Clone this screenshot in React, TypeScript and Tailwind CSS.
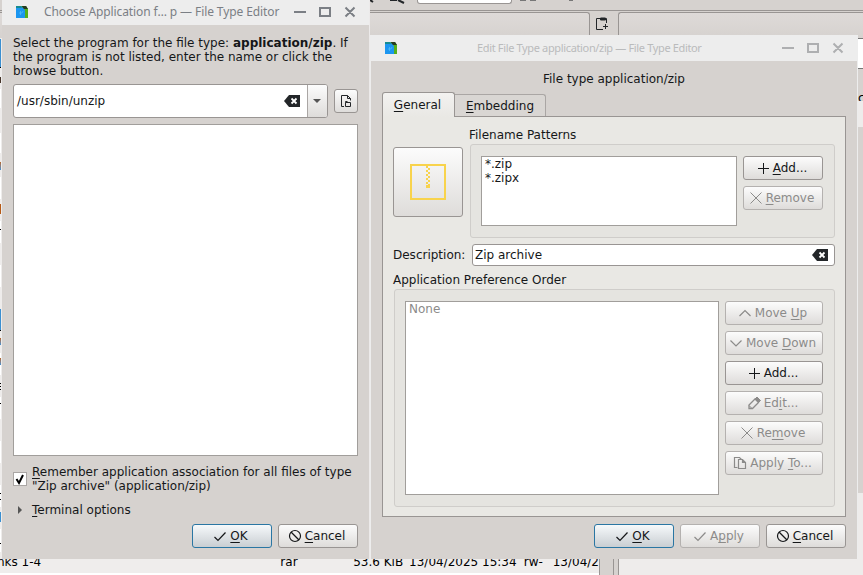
import type { ReactNode } from "react";
import clsx from "clsx";

type IconName =
  | "plus"
  | "cross"
  | "up"
  | "down"
  | "edit"
  | "copy"
  | "check"
  | "cancel";

const paths: Record<IconName, ReactNode> = {
  plus: <path d="M8.500 3v11M3 8.500h11" />,
  cross: <path d="M2.500 2.500l11 11M13.500 2.500l-11 11" />,
  up: <path d="M2.500 11L8 5.500l5.500 5.500" strokeWidth="1.2" />,
  down: <path d="M2.500 5.500L8 11l5.500-5.500" strokeWidth="1.2" />,
  edit: (
    <>
      <path d="M3 13.500v-3.500l6-6 3.500 3.500-6 6z" strokeWidth="1.3" />
      <path d="M9 4l2-2 3.500 3.500-2 2z" fill="currentColor" />
      <path d="M3 10.500l3 3" />
    </>
  ),
  copy: (
    <>
      <path d="M5.500 12.500h-3v-10h5l2 2" strokeWidth="1.2" />
      <path d="M6.500 4.500h4l3 3v6h-7zM10.500 4.500v3h3" strokeWidth="1.2" />
    </>
  ),
  check: <path d="M2.500 9l3.500 3.500 7.500-8" strokeWidth="1.2" />,
  cancel: (
    <>
      <circle cx="8" cy="8" r="5.500" strokeWidth="1.200" />
      <path d="M4 4l8 8" strokeWidth="1.200" />
    </>
  ),
};

function Icon({ name }: { name: IconName }) {
  return (
    <svg
      className="size-4 shrink-0"
      viewBox="0 0 16 16"
      fill="none"
      stroke="currentColor"
    >
      {paths[name]}
    </svg>
  );
}

// "&" marks the accelerator letter
function Label({ text }: { text: string }) {
  const i = text.indexOf("&");
  if (i < 0) return <span>{text}</span>;
  return (
    <span className="whitespace-pre">
      {text.slice(0, i)}
      <span className="underline decoration-1 underline-offset-2 [text-decoration-skip-ink:none]">
        {text[i + 1]}
      </span>
      {text.slice(i + 2)}
    </span>
  );
}

function Button({
  icon,
  text,
  disabled,
  primary,
}: {
  icon: IconName;
  text: string;
  disabled?: boolean;
  primary?: boolean;
}) {
  return (
    <button
      disabled={disabled}
      className={clsx(
        "flex h-6 min-w-20 items-center justify-center gap-0.5 rounded-[3px] border bg-linear-to-b pr-1 leading-[14px]",
        primary
          ? "border-[#2a76a3] from-[#f6f9fb] to-[#c9ced2]"
          : "from-[#fcfcfc] to-[#dedcda]",
        !primary && (disabled ? "border-[#b4b1af]" : "border-[#999593]"),
        disabled ? "text-[#8c8b8a]" : "text-[#151719]",
      )}
    >
      <Icon name={icon} />
      <Label text={text} />
    </button>
  );
}

function ClearIcon() {
  return (
    <svg className="h-3 w-4 shrink-0" viewBox="0 0 16 12">
      <path d="M0 6l5-6h11v12H5z" fill="#232629" />
      <path d="M7.500 3.500l5 5M12.500 3.500l-5 5" stroke="#fff" strokeWidth="1.8" />
    </svg>
  );
}

function AppIcon() {
  return (
    <svg className="size-3" viewBox="0 0 12 12">
      <path d="M5 0h5l2 3v9H5z" fill="#54b01c" />
      <path d="M6 0h4l2 3H7z" fill="#263b20" />
      <path d="M0 0h5l4 4v8H0z" fill="#1c96f0" />
      <path d="M0 0h5l1 2H0z" fill="#158b91" />
      <path d="M4.500 5v4M3 7h3l1-2" stroke="#5cc8fa" strokeWidth="0.6" fill="none" />
    </svg>
  );
}

function WindowButtons() {
  return (
    <svg
      className="h-3 w-[62px]"
      viewBox="0 0 62 12"
      fill="none"
      stroke="currentColor"
      strokeWidth="2"
    >
      <path d="M0 6h12M26 2h10v8H26zM51.500 1.500l9 9M60.500 1.500l-9 9" />
    </svg>
  );
}

// what shows of the file list left of the dialog
const slivers = [
  "mt-px h-[28px] bg-[#3b8fd0]",
  "h-px bg-black",
  "mt-[9px] h-1.5 bg-[#46352a]",
  "mt-[6px] h-[19px] bg-white",
  "mt-[25px] h-5 bg-white",
  "mt-[9px] h-2 bg-linear-to-b from-[#b5651d] to-[#3b8fd0]",
  "mt-[7px] h-[22px] bg-white",
  "mt-[5px] h-2.5 bg-[#b65a16]",
  "mt-[7px] h-2 bg-white",
  "h-px bg-black",
  "h-[13px] bg-white",
  "mt-[22px] h-[22px] bg-white",
  "mt-[22px] h-[21px] bg-[#3b8fd0]",
  "h-px bg-black",
  "mt-[7px] h-[7px] bg-linear-to-b from-[#b5651d] to-[#3b8fd0]",
  "mt-[8px] h-[5px] bg-white",
  "h-[7px] bg-linear-to-b from-[#b5651d] to-[#3b8fd0]",
  "h-[10px] bg-white",
  "mt-[8px] h-px bg-black",
  "mt-[2px] h-px bg-black",
  "mt-[2px] h-px bg-black",
  "mt-[7px] h-1.5 bg-white",
  "h-px bg-black",
  "h-[15px] bg-white",
  "mt-[22px] h-[22px] bg-white",
  "mt-[22px] h-2 bg-white",
  "h-px bg-black",
  "h-[5px] bg-white",
  "h-px bg-black",
  "h-[7px] bg-white",
  "mt-[5px] h-2.5 bg-[#3b8fd0]",
  "mt-[7px] h-3.5 bg-white",
  "h-px bg-black",
  "h-2 bg-white",
];

function Background() {
  return (
    <div className="flex h-full flex-col bg-[#eeeceb]">
      <div className="flex h-[11px] shrink-0 border-b border-[#999593] bg-[#d6d2cf] pl-[370px]">
        <svg className="h-1 w-[47px]" viewBox="0 0 47 4" stroke="#232629" strokeWidth="2">
          <path d="M0 0l3 2M20 0h7M28 0l6 3" fill="none" />
        </svg>
        <div className="h-1 w-[95px] rounded-b-[3px] border border-t-0 border-[#999593] bg-white" />
        <svg className="h-1 w-16" viewBox="0 0 64 4" fill="#777">
          <path d="M8 0h6v1H8zM18 0h6v1h-6zM57 0h4v1h-4z" />
        </svg>
      </div>
      <div className="flex h-[27px] shrink-0 bg-[#d6d2cf] pt-px">
        <div className="w-[590px] rounded-tr-[3px] border-t border-r border-[#999593] bg-linear-to-b from-[#dedad8] to-[#d6d2cf]" />
        <svg className="mt-1 ml-[5px] size-4" viewBox="0 0 16 16" fill="none" stroke="#232629">
          <path d="M8 13.500H1.500v-11h4M11.500 7V2.500h-2" />
          <path d="M5.500 2h5v2h-5z" fill="#232629" />
          <path d="M10.500 8v5M8 10.500h5" />
        </svg>
        <div className="ml-[7px] flex-1 rounded-tl-[3px] border-t border-l border-[#999593] bg-linear-to-b from-[#dedad8] to-[#d6d2cf]" />
      </div>
      <div className="flex min-h-0 flex-1 justify-between">
        <div className="flex w-px flex-col">
          {slivers.map((s, i) => (
            <div key={i} className={clsx("shrink-0", s)} />
          ))}
        </div>
        <div className="w-[5px]">
          <div className="h-[31px] border-y border-[#777] bg-white" />
          <div className="h-8 overflow-hidden bg-[#d6d2cf] pt-[22px] text-xs leading-[14px] text-black">
            c
          </div>
          <div className="h-[26px]" />
          <div className="h-[366px] bg-[#d6d2cf]" />
        </div>
      </div>
      <div className="flex h-4 shrink-0">
        <div className="flex w-[599px] shrink-0 flex-col bg-white">
          <div className="flex h-3.5 items-start overflow-hidden bg-[#efedec] leading-[14px] whitespace-pre text-black">
            <span className="-mt-1 ml-[-3px] w-[284px]">nks 1-4</span>
            <span className="-mt-1 w-[73px]">rar</span>
            <span className="-mt-1 w-14">53.6 KiB</span>
            <span className="-mt-1 w-[115px]">13/04/2025 15:34</span>
            <span className="-mt-1 w-[29px]">rw-</span>
            <span className="-mt-1">13/04/2</span>
          </div>
        </div>
        <div className="w-3.5 border-l border-[#999593] bg-[#d6d2cf]" />
        <div className="w-1.5 border-x border-[#999593] bg-[#d6d2cf]" />
      </div>
    </div>
  );
}

function ChooseDialog() {
  return (
    <div className="absolute top-0 left-[2px] flex h-[559px] w-[368px] flex-col border-r border-[#eceaea] bg-[#d6d2cf]">
      <div className="flex h-[25px] shrink-0 items-center bg-[#ededed] pr-[13px] pb-px pl-3.5 text-[#7b7f85]">
        <AppIcon />
        <span className="ml-4 flex-1 font-['Noto_Sans'] text-[12px] tracking-[-0.1px] whitespace-nowrap">
          Choose Application f… p — File Type Editor
        </span>
        <WindowButtons />
      </div>
      <div className="flex flex-1 flex-col pr-[11px] pb-[11px] pl-[11px]">
        <p className="pt-[11px] leading-[14px] whitespace-nowrap">
          Select the program for the file type: <b>application/zip</b>. If
          <br />
          the program is not listed, enter the name or click the
          <br />
          browse button.
        </p>
        <div className="mt-1.5 flex h-[34px] items-center justify-between">
          <div className="flex h-full w-[315px] overflow-hidden rounded-[3px] border border-[#999593] bg-white">
            <div className="flex flex-1 items-center justify-between pr-[7px] pl-[3px]">
              <span>/usr/sbin/unzip</span>
              <ClearIcon />
            </div>
            <div className="flex w-5 items-center justify-center border-l border-[#aaa6a4] bg-linear-to-b from-[#fcfcfc] to-[#dedcda] pr-px">
              <svg className="h-1 w-2" viewBox="0 0 8 4">
                <path d="M0 0h8L4 4z" fill="#555" />
              </svg>
            </div>
          </div>
          <button className="flex size-6 items-center justify-center rounded-[3px] border border-[#999593] bg-linear-to-b from-[#fcfcfc] to-[#dedcda]">
            <svg className="size-4" viewBox="0 0 16 16" fill="none" stroke="#232629">
              <path d="M6 13.500H3.500v-11h6l3 3v2M9.500 2.500v3h3" />
              <path d="M7.500 9.500h5v4h-5zM7.500 9.500v-1h2" />
            </svg>
          </button>
        </div>
        <div className="mt-1.5 h-[332px] border border-[#a19e9b] bg-white" />
        <div className="mt-[9px] flex gap-[5px]">
          <div className="mt-[7px] size-3.5 shrink-0 border border-[#aaa6a4] bg-white">
            <svg className="size-3" viewBox="0 0 12 12" fill="none" stroke="#000" strokeWidth="2">
              <path d="M2.500 6l2.500 4 4-8" />
            </svg>
          </div>
          <span className="leading-[14px] whitespace-nowrap">
            <Label text="&Remember application association for all files of type" />
            <br />
            "Zip archive" (application/zip)
          </span>
        </div>
        <div className="mt-2.5 flex items-center gap-2.5 pl-[5px] leading-[14px]">
          <svg className="h-2 w-1" viewBox="0 0 4 8">
            <path d="M0 0v8l4-4z" fill="#555" />
          </svg>
          <Label text="&Terminal options" />
        </div>
        <div className="mt-auto flex justify-end gap-1.5">
          <Button icon="check" text="&OK" primary />
          <Button icon="cancel" text="&Cancel" />
        </div>
      </div>
    </div>
  );
}

const actions: { icon: IconName; text: string; disabled: boolean }[] = [
  { icon: "up", text: "Move &Up", disabled: true },
  { icon: "down", text: "Move &Down", disabled: true },
  { icon: "plus", text: "Add...", disabled: false },
  { icon: "edit", text: "Ed&it...", disabled: true },
  { icon: "cross", text: "Re&move", disabled: true },
  { icon: "copy", text: "Apply &To...", disabled: true },
];

function ZipIcon() {
  const teeth = Array.from({ length: 11 }, (_, i) => i);
  return (
    <svg className="size-9" viewBox="0 0 36 36">
      <path d="M1 1h34v34H1z" fill="none" stroke="#f8d34c" strokeWidth="2" />
      {teeth.map((i) => (
        <rect
          key={i}
          x={i % 2 ? 18 : 16}
          y={2 + i * 2}
          width="2"
          height="2"
          fill="#f8d34c"
        />
      ))}
      <path d="M16 21h4v3h-4z" fill="#f8d34c" />
    </svg>
  );
}

function EditDialog() {
  return (
    <div className="absolute top-[35px] left-[370px] flex h-[524px] w-[488px] flex-col border-x border-[#ededed] bg-[#d6d2cf]">
      <div className="flex h-[26px] shrink-0 items-center bg-[#ededed] pr-[13px] pl-3.5 text-[#aeafb1]">
        <AppIcon />
        <span className="ml-20 flex-1 font-['Noto_Sans'] text-[11px] tracking-[-0.35px] whitespace-nowrap text-[#babbbc]">
          Edit File Type application/zip — File Type Editor
        </span>
        <WindowButtons />
      </div>
      <div className="flex flex-1 flex-col px-[11px] pb-[11px]">
        <p className="pt-[11px] text-center leading-[14px]">File type application/zip</p>
        <div className="mt-[5px] flex h-[25px] items-end">
          <div className="z-10 -mb-px h-[25px] w-[73px] rounded-t-[3px] border border-b-0 border-[#999593] bg-linear-to-b from-[#f3f2f0] to-[#e9e8e4] pt-[5px] pr-0.5 text-center leading-[14px]">
            <Label text="&General" />
          </div>
          <div className="h-[22px] w-[91px] rounded-tr-[3px] border border-b-0 border-l-0 border-[#aaa6a4] bg-[#d9d6d3] pt-[4px] text-center leading-[14px]">
            <Label text="&Embedding" />
          </div>
        </div>
        <div className="flex h-[401px] flex-col border border-[#999593] bg-[#e9e8e4] pr-2.5 pl-2.5">
          <div className="flex gap-[7px] pt-2.5">
            <button className="mt-5 flex size-[70px] items-center justify-center rounded-[3px] border border-[#999593] bg-linear-to-b from-[#fcfcfc] to-[#dedcda]">
              <ZipIcon />
            </button>
            <div className="flex-1">
              <p className="-mb-px -ml-px pt-px leading-[14px]">Filename Patterns</p>
              <div className="mt-[3px] flex h-[94px] gap-1.5 rounded-[3px] border border-[#cfcdca] bg-[#e5e4e0] pt-[11px] pl-2.5">
                <div className="h-[70px] w-64 border border-[#a19e9b] bg-white pl-[3px] leading-[14px]">
                  <p>*.zip</p>
                  <p>*.zipx</p>
                </div>
                <div className="flex flex-col gap-1.5">
                  <Button icon="plus" text="&Add..." />
                  <Button icon="cross" text="&Remove" disabled />
                </div>
              </div>
            </div>
          </div>
          <div className="mt-1.5 flex h-[22px] items-center">
            <span className="w-[79px]">Description:</span>
            <div className="flex h-full flex-1 items-center justify-between rounded-[3px] border border-[#999593] bg-white pr-1.5 pl-0.5">
              <span className="leading-[14px]">Zip archive</span>
              <ClearIcon />
            </div>
          </div>
          <p className="mt-[7px] leading-[14px]">Application Preference Order</p>
          <div className="mt-0.5 ml-px flex h-[218px] gap-1.5 rounded-[3px] border border-[#cfcdca] bg-[#e5e4e0] pt-[11px] pl-2.5">
            <div className="h-[194px] w-[314px] border border-[#a19e9b] bg-white pl-[3px] leading-[14px] text-[#8c8b8a]">
              None
            </div>
            <div className="flex w-[98px] flex-col gap-1.5">
              {actions.map((a) => (
                <Button key={a.text} {...a} />
              ))}
            </div>
          </div>
        </div>
        <div className="mt-auto flex justify-end gap-1.5">
          <Button icon="check" text="&OK" primary />
          <Button icon="check" text="A&pply" disabled />
          <Button icon="cancel" text="&Cancel" />
        </div>
      </div>
    </div>
  );
}

export default function App() {
  return (
    <div className="relative h-[575px] w-[863px] overflow-hidden font-['DejaVu_Sans',sans-serif] text-xs text-[#151719]">
      <Background />
      <ChooseDialog />
      <EditDialog />
    </div>
  );
}
